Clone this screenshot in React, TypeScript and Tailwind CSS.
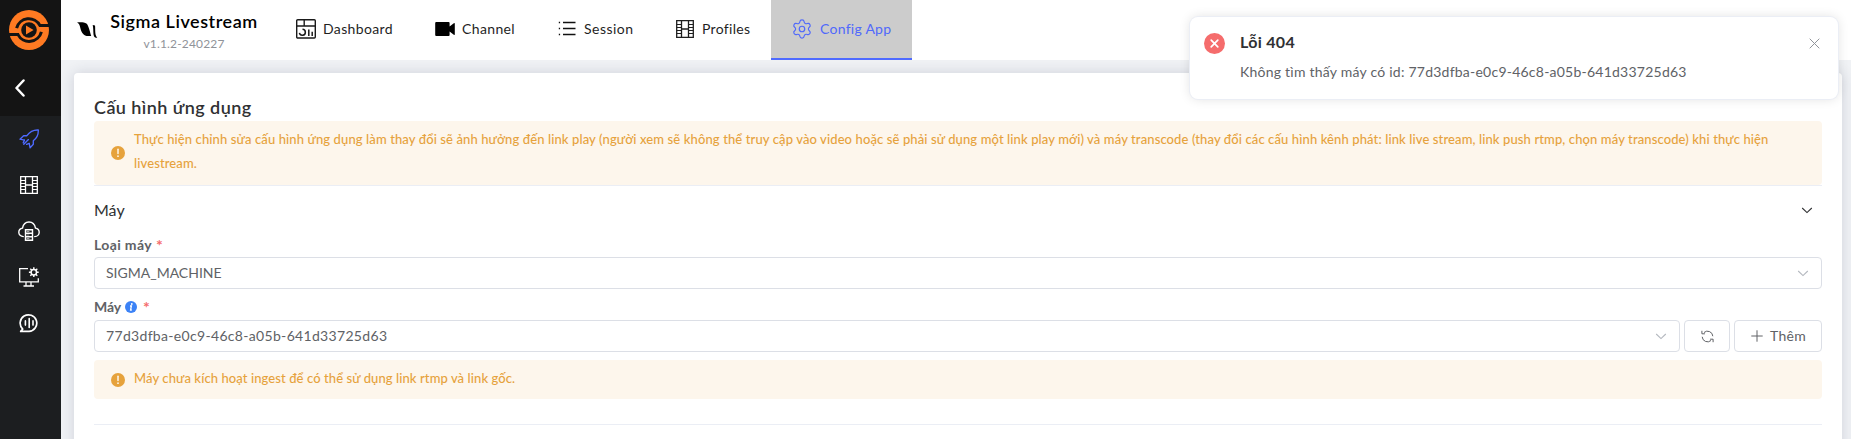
import type { ReactNode } from 'react';
import { Settings } from 'lucide-react';

function Logo() {
  return (
    <svg width="40" height="40" viewBox="0 0 40 40" fill="none">
      <circle cx="20" cy="20" r="20" fill="#ff7a22" />
      <path d="M7.6 18.2A12.6 12.6 0 0 1 31 15.6H40" stroke="#141414" strokeWidth="3" />
      <path d="M32.4 21.8A12.6 12.6 0 0 1 9 24.6H0" stroke="#141414" strokeWidth="3" />
      <circle cx="20" cy="20" r="7.8" fill="#141414" />
      <path d="M17 15.4v9.2l7.6-4.6z" fill="#ff7a22" />
    </svg>
  );
}

function BirdMark() {
  return (
    <svg width="21" height="17" viewBox="0 0 21 17" fill="#000">
      <path d="M0 .6C3 0 7.5.2 9.4 1.6 11.6 3.4 12.6 9 14.2 14H9.6C5.6 12.8 4 9 3.2 5.4 2.700 3 1.800 1.400 0 .6z" />
      <path d="M15.700 3l2.300.6c.3 1.800.1 4.400.3 7 .2 2.400.8 3.800 2 5.200-2 0-3.400-.8-3.800-3.400-.3-3-.1-6.400-.8-9.400z" />
    </svg>
  );
}

function RocketIcon() {
  return (
    <svg width="20" height="20" viewBox="0 0 20 20" fill="none" stroke="#4f6bff" strokeWidth="1.35" strokeLinejoin="round" strokeLinecap="round">
      <path d="M5.400 11.200L1 10.200l3.600-3.500h3.300C10.400 3.200 13 .6 19.300 1c.2 5-1.800 8.300-5 10.700v3.600l-3.200 3.600-.9-4.500" />
      <path d="M9.400 10.600l-4.600 4.600M5.400 11.200l-1.200 2.600M10.200 14.400l-2.600 1" />
    </svg>
  );
}

function FilmIcon() {
  return (
    <svg width="18" height="18" viewBox="0 0 18 18" fill="none" stroke="currentColor" strokeWidth="1.300">
      <path d="M.7.700h16.600v16.600H.700zM5.500 .7v16.600M12.500 .7v16.600M5.500 9h7" />
      <path d="M.7 4.500h4.800M.7 7.500h4.800M.7 10.500h4.800M.7 13.500h4.800M12.500 4.500h4.800M12.500 7.500h4.800M12.500 10.500h4.800M12.500 13.500h4.800" strokeWidth="1" />
    </svg>
  );
}

function CloudServerIcon() {
  return (
    <svg width="22" height="20" viewBox="0 0 22 20" fill="none" stroke="#fff" strokeWidth="1.400" strokeLinecap="round">
      <path d="M5.300 15.600C2.700 15.600.8 13.700.8 11.300c0-2.200 1.500-3.800 3.700-4.200C5.200 3.400 7.600 1 11 1s5.800 2.400 6.500 6.100c2.200.4 3.700 2 3.700 4.200 0 2.400-1.900 4.300-4.500 4.300" />
      <path d="M7.500 8.700h7v10.600h-7zM7.500 12.200h7M7.500 15.700h7" strokeLinecap="butt" />
      <path d="M9 10.500h2M9 14h2M9 17.500h2" strokeWidth=".6" />
    </svg>
  );
}

function MonitorGearIcon() {
  return (
    <svg width="20" height="20" viewBox="0 0 20 20" fill="none" stroke="#fff" strokeWidth="1.300">
      <path d="M9 1.700H.700v13.100h18.600v-3.600M7 15v3.700M12 15v3.700M4.500 19h10.500" />
      <circle cx="14.800" cy="5.200" r="2.700" strokeWidth="1.500" />
      <path d="M14.800.300v2M14.800 8v2.100M9.900 5.200h2M17.600 5.200h2.100M11.300 1.700l1.500 1.500M16.800 7.200l1.500 1.500M18.300 1.700l-1.500 1.500M12.800 7.200l-1.500 1.500" strokeWidth="1.400" />
    </svg>
  );
}

function VoiceIcon() {
  return (
    <svg width="20" height="20" viewBox="0 0 20 20" fill="none" stroke="#fff" strokeWidth="1.700" strokeLinecap="round" strokeLinejoin="round">
      <path d="M3.700 16.100A8.300 8.300 0 1 1 10 18.400H1.700l2-2.300z" />
      <path d="M6.400 7.900v4.200M10.200 5.600v8.800M14 7.900v4.200" strokeWidth="1.600" />
    </svg>
  );
}

function DashboardIcon() {
  return (
    <svg width="20" height="20" viewBox="0 0 20 20" fill="none" stroke="#1a1a1a" strokeWidth="1.400">
      <rect x=".7" y=".7" width="18.600" height="18.300" rx="1" />
      <path d="M.7 7h18.600M8.200.7V7" />
      <path d="M6.500 10.300a3 3 0 1 1-3.100 3.600M12.800 10.500v6.500M16.200 12.800V17" strokeWidth="1.500" />
    </svg>
  );
}

function CameraIcon() {
  return (
    <svg width="20" height="14" viewBox="0 0 20 14" fill="#000">
      <path d="M1.200 0h12.400q1 0 1 1v3.400L18.800 1.200q1-.5 1 .5v10.600q0 1-1 .5L14.600 9.600V13q0 1-1 1H1.200Q.2 14 .2 13V1q0-1 1-1z" />
    </svg>
  );
}

function ListIcon() {
  return (
    <svg width="18" height="15" viewBox="0 0 18 15" fill="none" stroke="#111">
      <path d="M5 1.500h12.500M5 7.500h12.500M5 13.500h12.500" strokeWidth="1.400" />
      <path d="M.8 1.500h1.300M.8 7.500h1.300M.8 13.500h1.300" strokeWidth="1.300" />
    </svg>
  );
}

function Chevron({ className }: { className: string }) {
  return (
    <svg className={className} width="12" height="7" viewBox="0 0 12 7" fill="none" stroke="currentColor" strokeWidth="1.100">
      <path d="M1.200 1L6 5.600 10.800 1" />
    </svg>
  );
}

function RefreshIcon() {
  return (
    <svg width="13" height="13" viewBox="0 0 13 13" fill="none" stroke="#606266" strokeWidth="1">
      <path d="M3 2.500A5.300 5.300 0 0 1 11.800 6.200M10 10.500A5.300 5.300 0 0 1 1.200 6.800M.900.800v3h3M12.100 12.200v-3h-3" />
    </svg>
  );
}

function WarningIcon() {
  return (
    <svg width="14" height="14" viewBox="0 0 14 14" className="shrink-0">
      <circle cx="7" cy="7" r="7" fill="#e6a23c" />
      <path d="M7 3.200v4.400" stroke="#fdf6ec" strokeWidth="1.500" strokeLinecap="round" />
      <circle cx="7" cy="10.200" r=".9" fill="#fdf6ec" />
    </svg>
  );
}

function InfoIcon() {
  return (
    <svg width="12" height="12" viewBox="0 0 12 12">
      <circle cx="6" cy="6" r="6" fill="#3b82f6" />
      <circle cx="6.800" cy="3" r=".9" fill="#fff" />
      <path d="M5 5h1.400L5.600 9h1.200" stroke="#fff" strokeWidth="1.300" fill="none" />
    </svg>
  );
}

function NavItem({ icon, width, active, children }: { icon: ReactNode; width: string; active?: boolean; children: ReactNode }) {
  return (
    <a className={`flex h-[60px] items-center gap-[7px] border-b-2 pl-[21px] pb-[2px] pt-px text-sm ${width} ${active ? 'border-[#4f6bff] bg-[#ccc] text-[#5069fb]' : 'border-transparent text-[#1f1f1f]'}`}>
      <span className="flex w-5 shrink-0 justify-center">{icon}</span>
      <span className="whitespace-nowrap">{children}</span>
    </a>
  );
}

function Sidebar() {
  return (
    <aside className="flex w-[61px] shrink-0 flex-col bg-[#1c1e20]">
      <div className="flex h-[116px] flex-col bg-[#141414] pl-[9px] pt-[10px]">
        <Logo />
        <svg className="ml-[6px] mt-[29px]" width="10" height="18" viewBox="0 0 10 18" fill="none" stroke="#fff" strokeWidth="2.500" strokeLinecap="round" strokeLinejoin="round">
          <path d="M8.500 1.500L1.500 9l7 7.500" />
        </svg>
      </div>
      <nav className="flex flex-col items-center pr-[3px]">
        <span className="flex h-[46px] items-center"><RocketIcon /></span>
        <span className="flex h-[46px] items-center text-white"><FilmIcon /></span>
        <span className="flex h-[46px] items-center"><CloudServerIcon /></span>
        <span className="flex h-[46px] items-center"><MonitorGearIcon /></span>
        <span className="flex h-[46px] items-center"><VoiceIcon /></span>
      </nav>
    </aside>
  );
}

function Header() {
  return (
    <header className="flex h-[60px] shrink-0 bg-white">
      <div className="flex w-[214px] pl-[16px]">
        <div className="mt-[22px]"><BirdMark /></div>
        <div className="ml-[11px] flex w-[150px] flex-col items-center pt-[8px]">
          <div className="whitespace-nowrap text-[18px] font-semibold leading-[26px] tracking-[0.53px] text-black">Sigma Livestream</div>
          <div className="mt-px text-[12px] leading-[18px] tracking-[0.16px] text-[#909399]">v1.1.2-240227</div>
        </div>
      </div>
      <NavItem width="w-[139px]" icon={<DashboardIcon />}><span className="tracking-[0.37px]">Dashboard</span></NavItem>
      <NavItem width="w-[122px]" icon={<CameraIcon />}><span className="tracking-[0.37px]">Channel</span></NavItem>
      <NavItem width="w-[118px]" icon={<ListIcon />}><span className="tracking-[0.47px]">Session</span></NavItem>
      <NavItem width="w-[117px]" icon={<FilmIcon />}><span className="tracking-[0.3px]">Profiles</span></NavItem>
      <NavItem width="w-[141px]" active icon={<Settings size={22} strokeWidth={1.3} className="shrink-0" />}><span className="ml-px tracking-[0.27px]">Config App</span></NavItem>
    </header>
  );
}

function Notification() {
  return (
    <div className="absolute left-[1190px] top-[17px] flex h-[82px] w-[648px] rounded-lg bg-white pl-[14px] pr-[18px] shadow-[0_0_12px_rgba(0,0,0,0.12)] ring-1 ring-[#ebeef5]">
      <svg className="mt-[16px] shrink-0" width="21" height="21" viewBox="0 0 21 21">
        <circle cx="10.500" cy="10.500" r="10.500" fill="#f56c6c" />
        <path d="M7.200 7.200l6.600 6.600M13.800 7.200l-6.600 6.600" stroke="#fff" strokeWidth="1.700" strokeLinecap="round" />
      </svg>
      <div className="ml-[15px] flex-1">
        <div className="mt-[13px] text-base font-bold leading-6 tracking-[0.3px] text-[#303133]">Lỗi 404</div>
        <div className="mt-[7px] text-sm leading-[22px] tracking-[0.233px] text-[#606266]">Không tìm thấy máy có id: 77d3dfba-e0c9-46c8-a05b-641d33725d63</div>
      </div>
      <svg className="mt-[21px]" width="11" height="11" viewBox="0 0 11 11" stroke="#909399" strokeWidth="1">
        <path d="M.7.700l9.600 9.600M10.300.700L.700 10.300" />
      </svg>
    </div>
  );
}

export default function App() {
  return (
    <div className="relative flex h-[439px] w-full overflow-hidden bg-[#f0f2f5] font-['Lato','Noto_Sans',sans-serif]">
      <Sidebar />
      <div className="flex min-w-0 flex-1 flex-col">
        <Header />
        <main className="flex-1 pl-[13px] pr-[9px] pt-[13px]">
          <section className="h-[400px] rounded bg-white px-5 pt-5 shadow-[0_0_14px_rgba(40,45,80,0.16)]">
            <h1 className="h-7 text-[18px] font-semibold leading-7 tracking-[0.43px] text-[#303133]">Cấu hình ứng dụng</h1>
            <div className="flex h-16 items-center gap-[9px] rounded bg-[#fdf6ec] pl-[17px] pr-4">
              <WarningIcon />
              <p className="pb-[5px] text-[13px] font-medium leading-6 tracking-[0.112px] text-[#e6a23c]">
                Thực hiện chỉnh sửa cấu hình ứng dụng làm thay đổi sẽ ảnh hưởng đến link play (người xem sẽ không thể truy cập vào video hoặc sẽ phải sử dụng một link play mới) và máy transcode (thay đổi các cấu hình kênh phát: link live stream, link push rtmp, chọn máy transcode) khi thực hiện livestream.
              </p>
            </div>
            <div className="flex h-[49px] items-center justify-between border-t border-[#ebeef5] pr-[9px] text-base text-[#303133]">
              <span>Máy</span>
              <Chevron className="text-[#303133]" />
            </div>
            <div className="flex h-[23px] gap-[4px] text-sm font-bold leading-[21px] text-[#606266]">
              <span className="tracking-[0.37px]">Loại máy</span>
              <span className="text-base leading-[22px] text-[#f56c6c]">*</span>
            </div>
            <div className="flex h-8 items-center justify-between rounded border border-[#dcdfe6] pl-[11px] pr-[12px] text-sm text-[#606266]">
              <span className="pb-px">SIGMA_MACHINE</span>
              <Chevron className="text-[#b4b8bf]" />
            </div>
            <div className="flex h-[31px] items-center pt-[5px] text-sm font-bold text-[#606266]">
              <span className="tracking-[-0.1px]">Máy</span>
              <span className="ml-[4px]"><InfoIcon /></span>
              <span className="ml-[6px] text-base text-[#f56c6c]">*</span>
            </div>
            <div className="flex h-8 gap-1 text-sm text-[#606266]">
              <div className="flex flex-1 items-center justify-between rounded border border-[#dcdfe6] pl-[11px] pr-[12px]">
                <span className="pb-px tracking-[0.32px]">77d3dfba-e0c9-46c8-a05b-641d33725d63</span>
                <Chevron className="text-[#b4b8bf]" />
              </div>
              <button className="flex w-[46px] items-center justify-center rounded border border-[#dcdfe6]"><RefreshIcon /></button>
              <button className="flex w-[88px] items-center gap-[7px] rounded border border-[#dcdfe6] pl-[16px]">
                <svg width="12" height="12" viewBox="0 0 12 12" stroke="#606266" strokeWidth="1"><path d="M6 .3v11.400M.3 6h11.400" /></svg>
                <span className="pb-px tracking-[0.28px]">Thêm</span>
              </button>
            </div>
            <div className="mt-2 flex h-[39px] items-center gap-[9px] rounded bg-[#fdf6ec] pl-[17px]">
              <WarningIcon />
              <p className="pb-[2px] text-[13px] font-medium tracking-[0.09px] text-[#e6a23c]">Máy chưa kích hoạt ingest để có thể sử dụng link rtmp và link gốc.</p>
            </div>
            <div className="mt-[25px] h-px bg-[#ebeef5]" />
          </section>
        </main>
      </div>
      <Notification />
    </div>
  );
}
